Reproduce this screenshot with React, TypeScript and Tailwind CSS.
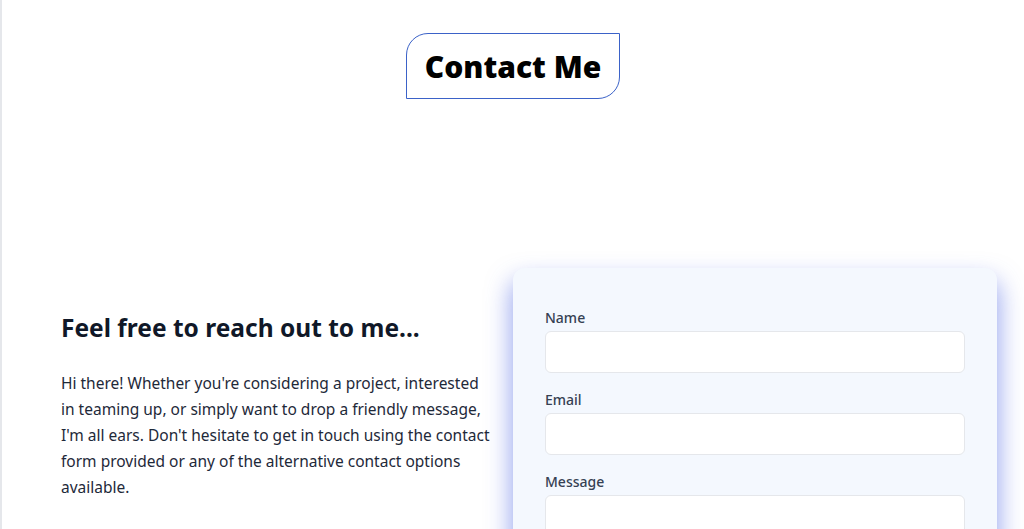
import { useState } from 'react';

export default function App() {
  const [form, setForm] = useState({ name: '', email: '', message: '' });

  const update = (key: 'name' | 'email' | 'message') => (e: React.ChangeEvent<HTMLInputElement | HTMLTextAreaElement>) =>
    setForm({ ...form, [key]: e.target.value });

  return (
    <div className="min-h-screen bg-white border-l-2 border-gray-200 font-['Noto_Sans','Open_Sans',sans-serif] overflow-hidden">
      <section className="pt-[33px] flex justify-center">
        <h1 className="border border-[#3b62c8] rounded-tl-[22px] rounded-br-[22px] px-[18px] h-[66px] flex items-center text-[30px] font-black text-black">
          Contact Me
        </h1>
      </section>

      <section className="pt-[169px] pl-[59px] flex items-start gap-[22px]">
        <div className="w-[430px] mt-[44px]">
          <h2 className="text-[24.5px] font-bold text-gray-900 leading-8 mb-[26px]">
            Feel free to reach out to me...
          </h2>
          <p className="text-[15.5px] leading-[26px] text-gray-800">
            Hi there! Whether you're considering a project, interested in teaming up, or simply want to drop a
            friendly message, I'm all ears. Don't hesitate to get in touch using the contact form provided or any of
            the alternative contact options available.
          </p>
        </div>

        <form className="w-[484px] bg-[#f4f8fe] rounded-xl px-8 pt-10 pb-8 shadow-[0_14px_24px_2px_rgba(70,95,225,0.55)]">
          <label className="block text-sm font-medium text-gray-700 mb-[3px]">Name</label>
          <input
            value={form.name}
            onChange={update('name')}
            className="block w-full h-[42px] mb-[17px] bg-white border border-gray-200 rounded-md px-3 outline-none"
          />
          <label className="block text-sm font-medium text-gray-700 mb-[3px]">Email</label>
          <input
            value={form.email}
            onChange={update('email')}
            className="block w-full h-[42px] mb-[17px] bg-white border border-gray-200 rounded-md px-3 outline-none"
          />
          <label className="block text-sm font-medium text-gray-700 mb-[3px]">Message</label>
          <textarea
            value={form.message}
            onChange={update('message')}
            rows={5}
            className="block w-full bg-white border border-gray-200 rounded-md px-3 py-2 outline-none resize-none"
          />
        </form>
      </section>
    </div>
  );
}
